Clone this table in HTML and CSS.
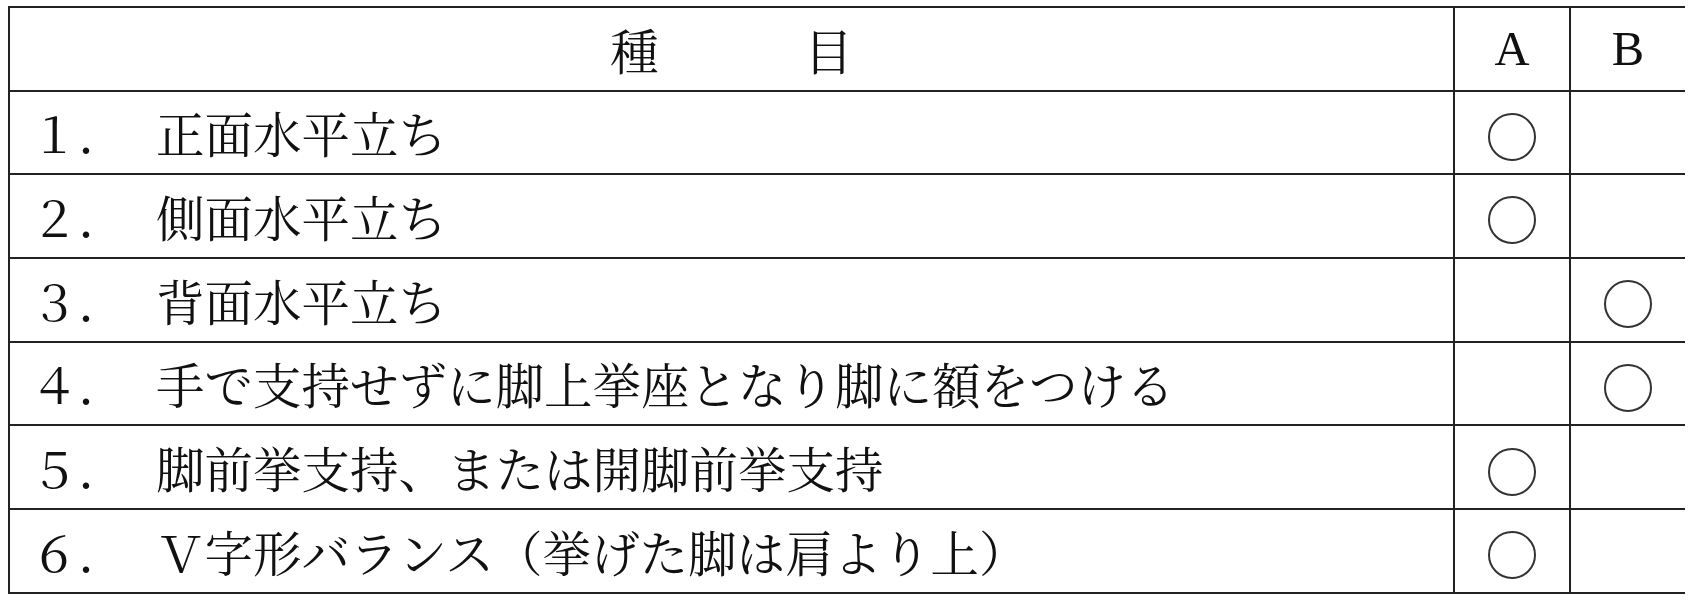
FILE: index.html
```html
<!DOCTYPE html>
<html lang="ja">
<head>
<meta charset="utf-8">
<link rel="stylesheet" href="styles.css">
</head>
<body>
<table class="sheet">
  <colgroup>
    <col class="c-item">
    <col class="c-mark">
    <col class="c-mark">
  </colgroup>
  <thead>
    <tr>
      <th class="head-item">種　　　目</th>
      <th class="head-mark">A</th>
      <th class="head-mark">B</th>
    </tr>
  </thead>
  <tbody>
    <tr>
      <td class="item"><span class="num">１．</span><span class="txt">正面水平立ち</span></td>
      <td class="mark"><span class="circle"></span></td>
      <td class="mark"></td>
    </tr>
    <tr>
      <td class="item"><span class="num">２．</span><span class="txt">側面水平立ち</span></td>
      <td class="mark"><span class="circle"></span></td>
      <td class="mark"></td>
    </tr>
    <tr>
      <td class="item"><span class="num">３．</span><span class="txt">背面水平立ち</span></td>
      <td class="mark"></td>
      <td class="mark"><span class="circle"></span></td>
    </tr>
    <tr>
      <td class="item"><span class="num">４．</span><span class="txt">手で支持せずに脚上挙座となり脚に額をつける</span></td>
      <td class="mark"></td>
      <td class="mark"><span class="circle"></span></td>
    </tr>
    <tr>
      <td class="item"><span class="num">５．</span><span class="txt">脚前挙支持、または開脚前挙支持</span></td>
      <td class="mark"><span class="circle"></span></td>
      <td class="mark"></td>
    </tr>
    <tr>
      <td class="item"><span class="num">６．</span><span class="txt">Ｖ字形バランス（挙げた脚は肩より上）</span></td>
      <td class="mark"><span class="circle"></span></td>
      <td class="mark"></td>
    </tr>
  </tbody>
</table>
</body>
</html>
```
FILE: styles.css
```css
html, body {
  background: #ffffff;
}
body {
  margin: 6px 8px;
  font-family: "Noto Serif CJK JP", "Liberation Serif", "Noto Sans CJK JP", serif;
  color: #111111;
}
.sheet {
  border-collapse: collapse;
  table-layout: fixed;
  width: 1677px;
}
.c-item { width: 1445px; }
.c-mark { width: 116px; }
.sheet th,
.sheet td {
  border: 2px solid #222222;
  height: 81.7px;
  padding: 0;
  font-weight: normal;
  font-size: 48.5px;
  line-height: 1;
}
.head-item {
  text-align: center;
}
.head-mark {
  text-align: center;
  font-family: "Liberation Serif", serif;
  font-size: 47px;
}
.item {
  padding-left: 20px !important;
  white-space: nowrap;
}
.num {
  display: inline-block;
  width: 126px;
}
.mark {
  text-align: center;
  vertical-align: middle;
}
.circle {
  display: inline-block;
  width: 44px;
  height: 44px;
  border: 2px solid #333333;
  border-radius: 50%;
  vertical-align: middle;
}
```
